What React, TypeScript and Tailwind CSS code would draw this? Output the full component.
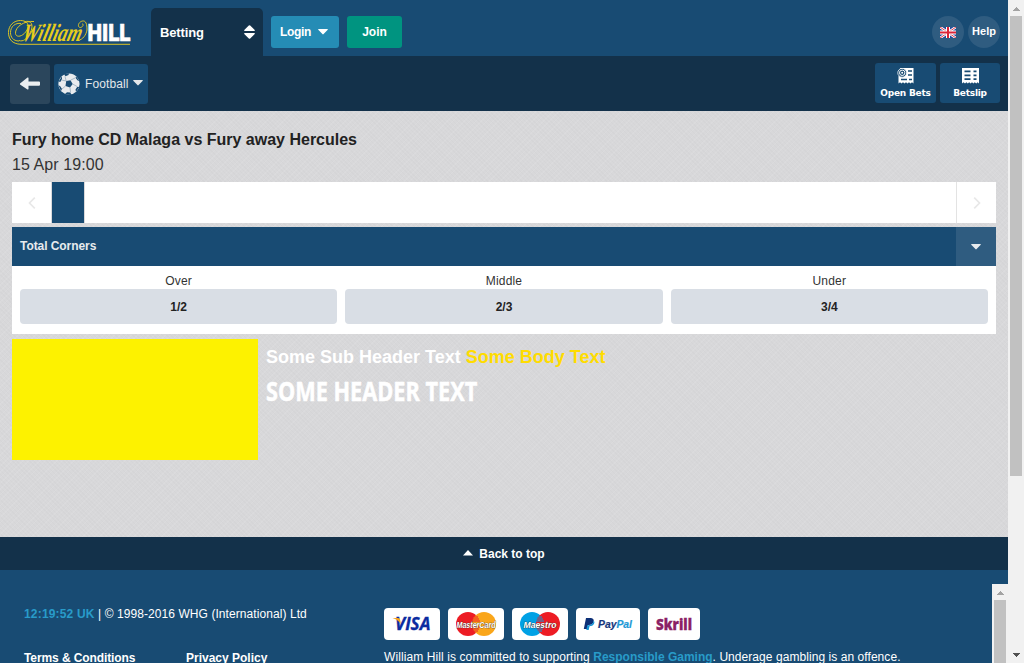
import type { ReactNode } from 'react';

function Logo() {
  return (
    <svg width="124" height="30" viewBox="0 0 124 30" className="ml-[7px] mt-[17px] block shrink-0">
      <g fill="none" stroke="#dcc423" strokeWidth="1">
        <path d="M123 27.3H14C5 27 1.5 22 1.5 15.5C1.5 8 7 3.5 13.5 3.5C20 3.5 23 8 20 13C16 20 9 21 8.5 16.5C8 10 17 3.5 27 4.5" />
        <path d="M12 24C6 24 3.5 20 3.5 15.5C3.5 9.5 8.5 5.5 14 6.5" />
        <path d="M17 5C25 2 27 9 23 16C20 22 16 25 12 23.500" />
        <path d="M71 23.5C76 22.500 79 18 80 13C80 7 79 3.500 75.500 4C71 5 70 10.500 73.500 10.500C76 10 77 7.500 75 6.500" />
      </g>
      <text x="14" y="24" fontFamily="'Liberation Serif', serif" fontStyle="italic" fontSize="25" fill="#e6cd1b" textLength="59" lengthAdjust="spacingAndGlyphs" transform="translate(6.500 0) skewX(-15)">William</text>
      <text x="80.500" y="23.700" fontFamily="Roboto, sans-serif" fontWeight="900" fontSize="24.500" fill="#fff" stroke="#fff" strokeWidth="0.6" textLength="43" lengthAdjust="spacingAndGlyphs">HILL</text>
    </svg>
  );
}

function Caret({ up = false, className = '' }: { up?: boolean; className?: string }) {
  return (
    <svg width="10" height="6" viewBox="0 0 10 6" fill="currentColor" className={className}>
      <path d={up ? 'M0 5.4L5 0L10 5.4Z' : 'M0.3 0H9.7Q10 .5 9.5 1L5.6 5.1Q5 5.8 4.4 5.1L.5 1Q0 .5.3 0Z'} />
    </svg>
  );
}

function Ball() {
  return (
    <svg width="22" height="22" viewBox="0 0 22 22" className="shrink-0">
      <circle cx="11" cy="11" r="10.6" fill="#e8ebee" />
      <g fill="#184b73">
        <path d="M8.200 8L12.500 7.200L14.700 11L12 14.500L7.500 13Z" />
        <path d="M6 1.2L11 .2L10.500 2L7.500 3.300ZM18 3.3L21.500 8L19.700 7.600L17.600 5ZM21.300 14L18 19L17.500 16.5L19.300 13.8ZM13.3 22L7 21L9 19.300L12.500 19.600ZM3 18L.3 12L2.500 13.5L4 16ZM.6 8.5L4 3.2L4 6L2.300 9Z" />
      </g>
      <path d="M8.200 8L7 3.500M12.500 7.200L17 5M14.700 11L19 13.5M12 14.500L12.500 19M7.500 13L4 16M8.200 8L3.5 7" fill="none" stroke="#8aa2b5" strokeWidth="0.7" />
    </svg>
  );
}

function Flag() {
  return (
    <svg width="16" height="11" viewBox="0 0 16 11" className="mt-px">
      <path fill="#244a9b" d="M0 0h16v11H0z" />
      <path d="M0 0L16 11M16 0L0 11" stroke="#fff" strokeWidth="2.6" />
      <path d="M0 0L16 11M16 0L0 11" stroke="#e03b4b" strokeWidth="1" />
      <path d="M8 0V11M0 5.5H16" stroke="#fff" strokeWidth="4" />
      <path d="M8 0V11M0 5.5H16" stroke="#dc2438" strokeWidth="2" />
    </svg>
  );
}

function SlipIcon({ open = false }: { open?: boolean }) {
  return (
    <svg width="17" height="16" viewBox="0 0 17 16">
      <path fill="#fff" d={open ? 'M3 0H16.500V15.500L15 14.300L13.500 15.500L12 14.300L10.500 15.500L9 14.300L7.500 15.500L6 14.300L4.500 15.500L3 14.300L1.500 15.500V8H3Z' : 'M0 0H17V15.5L15.6 14.3L14.2 15.5L12.8 14.3L11.4 15.5L10 14.3L8.6 15.5L7.2 14.3L5.8 15.5L4.4 14.3L3 15.5L1.5 14.3L0 15.5Z'} />
      {open ? (
        <>
          <path d="M11 3h4M11 7h4M4 11.500h6M12 11.500h3" stroke="#184b73" strokeWidth="1.3" />
          <circle cx="5.200" cy="4.800" r="4.400" fill="#184b73" stroke="#fff" strokeWidth=".8" />
          <circle cx="5.200" cy="4.800" r="2.700" fill="#184b73" stroke="#fff" strokeWidth="1" />
          <circle cx="5.200" cy="4.800" r="1" fill="#fff" />
        </>
      ) : (
        <path d="M2.5 3.4h6M2.5 7.3h6M2.5 11.2h6M11.5 3.4h3M11.5 7.3h3M11.5 11.2h3" stroke="#184b73" strokeWidth="1.7" />
      )}
    </svg>
  );
}

function SlipButton({ label, open, width }: { label: string; open?: boolean; width: string }) {
  return (
    <button className={`flex h-10 flex-col items-center rounded-[3px] bg-[#184b73] pt-[5px] ${width}`}>
      <SlipIcon open={open} />
      <span className="mt-[2px] whitespace-nowrap font-['DejaVu_Sans',sans-serif] text-[9px] font-bold leading-[14px] tracking-[-0.025em] text-white">{label}</span>
    </button>
  );
}

function ScrollBar({ thumb, bottom = false }: { thumb: string; bottom?: boolean }) {
  return (
    <div className="flex h-full w-4 shrink-0 flex-col items-center bg-[#f1f1f1]">
      <div className="flex h-4 w-4 shrink-0 items-center justify-center pt-px">
        <svg width="7" height="4" viewBox="0 0 7 4" shapeRendering="crispEdges"><path fill="#a3a3a3" d="M3 0h1v1h1v1h1v1h1v1H0V3h1V2h1V1h1z" /></svg>
      </div>
      <div className={`w-3 shrink-0 bg-[#c1c1c1] ${thumb}`} />
      {bottom && (
        <div className="mt-auto flex h-4 items-center justify-center">
          <svg width="7" height="4" viewBox="0 0 7 4" shapeRendering="crispEdges"><path fill="#505050" d="M0 0h7v1H6v1H5v1H4v1H3V3H2V2H1V1H0z" /></svg>
        </div>
      )}
    </div>
  );
}

function Odds({ label, price }: { label: string; price: string }) {
  return (
    <div className="flex flex-1 flex-col text-center text-[#333]">
      <span className="h-[15px] text-[12px] leading-[15px] tracking-[0.015em]">{label}</span>
      <button className="h-[35px] rounded-[4px] bg-[#d9dee5] text-[12px] font-bold text-[#222]">{price}</button>
    </div>
  );
}

function Card({ width, children }: { width: string; children: ReactNode }) {
  return <div className={`flex h-8 items-center justify-center rounded-[4px] bg-white ${width}`}>{children}</div>;
}

function Circles({ left, right, label }: { left: string; right: string; label: string }) {
  return (
    <svg width="42" height="26" viewBox="0 0 42 26">
      <circle cx="13" cy="13" r="12" fill={left} />
      <circle cx="29" cy="13" r="12" fill={right} />
      <path d="M19 6H23M18 8H24M17 10H25M17 16H25M18 18H24M19 20H23" stroke={left} strokeWidth="1" />
      <text x="21" y="16.5" textAnchor="middle" fontFamily="'Liberation Sans', sans-serif" fontStyle="italic" fontWeight="700" fontSize="9.500" fill="#fff" stroke="#333" strokeWidth=".6" paintOrder="stroke" textLength={label === 'Maestro' ? 33 : 39} lengthAdjust="spacingAndGlyphs">{label}</text>
    </svg>
  );
}

function Payments() {
  return (
    <div className="flex gap-2">
      <Card width="w-14">
        <svg width="40" height="20" viewBox="0 0 40 20">
          <text x="3" y="16" fontFamily="'Open Sans', sans-serif" fontStyle="italic" fontWeight="700" fontSize="17" fill="#0b2ba0" stroke="#0b2ba0" strokeWidth=".3" textLength="35.500" lengthAdjust="spacingAndGlyphs">VISA</text>
          <path fill="#f5a31c" d="M.5 4H6Q8 4 8.2 6L8.800 10Q6 5.5 .5 4Z" />
        </svg>
      </Card>
      <Card width="w-14"><Circles left="#ed1c24" right="#faa61a" label="MasterCard" /></Card>
      <Card width="w-14"><Circles left="#00a1e5" right="#ed1c24" label="Maestro" /></Card>
      <Card width="w-16">
        <svg width="50" height="16" viewBox="0 0 50 16">
          <path fill="#0c2f76" d="M3 2H8Q11.5 2.5 10.5 6Q9.5 9.3 5 9L4.2 13H.8Z" />
          <path fill="#1595d6" d="M10.8 4.5Q12 6 11 8Q9.7 10.3 6.5 10.3L5.7 14H3.3L4.3 9.2Q9.7 9.6 10.8 4.5Z" />
          <text x="15" y="12" fontFamily="'Liberation Sans', sans-serif" fontStyle="italic" fontWeight="700" fontSize="11" fill="#16377c" stroke="#16377c" strokeWidth=".2" textLength="34" lengthAdjust="spacingAndGlyphs">Pay<tspan fill="#1d99d6" stroke="#1d99d6">Pal</tspan></text>
        </svg>
      </Card>
      <Card width="w-[52px]">
        <svg width="38" height="18" viewBox="0 0 38 18">
          <text x="1" y="14.5" fontFamily="'Open Sans', sans-serif" fontWeight="800" fontSize="15" fill="#8b2165" stroke="#8b2165" strokeWidth=".3" textLength="36" lengthAdjust="spacingAndGlyphs">Skrill</text>
        </svg>
      </Card>
    </div>
  );
}

export default function App() {
  return (
    <div className="flex h-[663px] w-[1024px] overflow-hidden font-['Liberation_Sans',Arial,sans-serif]">
      <div className="flex w-[1008px] flex-col">
        <header className="flex h-14 shrink-0 bg-[#184b73] text-[12px] font-bold text-white">
          <Logo />
          <div className="ml-5 mt-2 flex h-12 w-28 items-center justify-between rounded-t-[5px] bg-[#13314a] pl-[9px] pr-2 text-[13px]">
            <span className="pt-px tracking-[-0.01em]">Betting</span>
            <svg width="11" height="14" viewBox="0 0 11 14" fill="#fff"><path d="M.5 6Q-.2 5.5.5 4.7L4.8.5Q5.5 0 6.2.5L10.5 4.7Q11.2 5.5 10.5 6ZM.5 8H10.5Q11.2 8.5 10.5 9.3L6.2 13.5Q5.5 14 4.8 13.5L.5 9.3Q-.2 8.5.5 8Z" /></svg>
          </div>
          <button className="ml-2 mt-4 flex h-8 w-[68px] items-center rounded-[3px] bg-[#258cb5] pl-[9px]"><span className="w-8 text-left tracking-[-0.03em]">Login</span><Caret className="ml-[6px]" /></button>
          <button className="ml-2 mt-4 h-8 w-[55px] rounded-[3px] bg-[#009480]">Join</button>
          <div className="ml-auto mr-2 mt-4 flex gap-1 text-[11px]">
            <button className="flex size-8 items-center justify-center rounded-full bg-[#2f5c80]"><Flag /></button>
            <button className="flex size-8 items-center justify-center rounded-full bg-[#2f5c80] pb-px">Help</button>
          </div>
        </header>

        <nav className="flex h-[55px] shrink-0 bg-[#13314a] pl-[10px] pr-2">
          <button className="mt-2 flex h-10 w-10 items-center justify-center rounded-[3px] bg-[#2b465c]">
            <svg width="20" height="14" viewBox="0 0 20 14" fill="#ebeef0"><path d="M0 6.5L7.5.6Q8.5 0 8.5 1.2V4.5H19Q20 4.5 20 5.5V7.8Q20 8.8 19 8.8H8.5V11.8Q8.5 13 7.5 12.4L0 7.5Q-.4 7 0 6.5Z" /></svg>
          </button>
          <button className="ml-1 mt-2 flex h-10 w-[94px] items-center rounded-[3px] bg-[#184b73] pl-1 text-[12px] text-[#e3e7ea]">
            <Ball /><span className="ml-[5px] w-[44px] text-left tracking-[0.01em]">Football</span><Caret className="mb-0.5 ml-1" />
          </button>
          <div className="ml-auto mt-[7px] flex gap-1">
            <SlipButton label="Open Bets" open width="w-[61px]" />
            <SlipButton label="Betslip" width="w-[60px]" />
          </div>
        </nav>

        <main className="h-[426px] shrink-0 bg-[#d8d8da] bg-[repeating-linear-gradient(45deg,#0000_0_2px,#00000004_2px_3px),repeating-linear-gradient(135deg,#0000_0_3px,#ffffff14_3px_4px)] px-3 pt-[18px]">
          <h1 className="h-[22px] text-[16px] font-bold leading-[22px] text-[#222]">Fury home CD Malaga vs Fury away Hercules</h1>
          <p className="h-[31px] text-[16px] leading-[27px] tracking-[0.005em] text-[#333]">15 Apr 19:00</p>
          <div className="flex h-[41px] bg-white text-[#e8e8e8]">
            <button className="flex w-10 items-center justify-center border-r border-[#d9d9db]"><svg width="8" height="12" viewBox="0 0 8 12" fill="none" stroke="currentColor" strokeWidth="1.7"><path d="M6.8.7L1.5 6L6.8 11.3" /></svg></button>
            <div className="w-[33px] border-r border-[#d9d9db] bg-[#184b73]" />
            <button className="ml-auto flex w-10 items-center justify-center border-l border-[#e3e3e3]"><svg width="8" height="12" viewBox="0 0 8 12" fill="none" stroke="currentColor" strokeWidth="1.7"><path d="M1.2.7L6.5 6L1.2 11.3" /></svg></button>
          </div>
          <section className="mt-1 bg-white">
            <div className="flex h-[39px] items-center justify-between bg-[#184b73] pl-2 text-[12px] font-bold text-[#e7ebee]">
              <span className="pb-px tracking-[-0.005em]">Total Corners</span>
              <button className="flex h-full w-10 items-center justify-center bg-[#2f5c80]"><Caret /></button>
            </div>
            <div className="flex h-[68px] gap-2 px-2 pt-2">
              <Odds label="Over" price="1/2" />
              <Odds label="Middle" price="2/3" />
              <Odds label="Under" price="3/4" />
            </div>
          </section>
          <section className="mt-[5px] flex">
            <div className="h-[121px] w-[246px] bg-[#fdf200]" />
            <div className="ml-2 pt-[6px] font-bold text-white">
              <p className="text-[18px] leading-6">Some Sub Header Text <span className="text-[#ffdc00]">Some Body Text</span></p>
              <p className="mt-2 w-max origin-left scale-x-[0.835] whitespace-nowrap font-['Open_Sans',sans-serif] text-[26px] leading-[28px] [-webkit-text-stroke:0.5px_#fff]">SOME HEADER TEXT</p>
            </div>
          </section>
        </main>

        <a className="flex h-[33px] shrink-0 items-center justify-center bg-[#13314a] text-[12px] font-bold text-white"><Caret up className="mb-0.5 mr-[6px]" />Back to top</a>

        <footer className="flex h-[93px] shrink-0 bg-[#184b73] text-[12px] text-white">
          <div className="w-[360px] shrink-0 pl-6 pt-9">
            <p className="h-[44px] whitespace-nowrap leading-4"><b className="tracking-[0.015em] text-[#289bc9]">12:19:52 UK</b><span className="tracking-[0.006em]"> | © 1998-2016 WHG (International) Ltd</span></p>
            <div className="flex font-bold leading-4"><span className="w-[162px] tracking-[-0.008em]">Terms &amp; Conditions</span><span>Privacy Policy</span></div>
          </div>
          <div className="flex-1 pl-6 pt-[38px]">
            <Payments />
            <p className="mt-[9px] whitespace-nowrap leading-4 tracking-[0.008em]">William Hill is committed to supporting <b className="tracking-[0] text-[#289bc9]">Responsible Gaming</b><span className="tracking-[0.005em]">. Underage gambling is an offence.</span></p>
          </div>
          <div className="mt-[14px] h-[79px]"><ScrollBar thumb="h-16" /></div>
        </footer>
      </div>
      <ScrollBar thumb="h-[460px]" bottom />
    </div>
  );
}
